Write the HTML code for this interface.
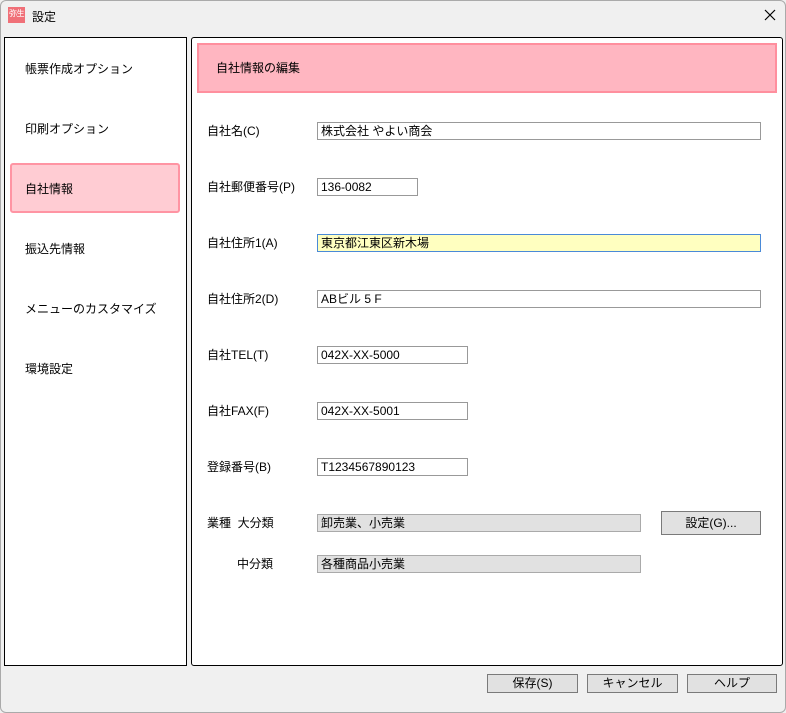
<!DOCTYPE html><html><head><meta charset="utf-8"><style>
*{box-sizing:border-box;margin:0;padding:0}
body{width:786px;height:713px;background:#f0f0f0;font-family:"Liberation Sans","Noto Sans CJK JP",sans-serif;font-size:12px;color:#000;position:relative;overflow:hidden}
.a{position:absolute}
.win{left:0;top:0;width:786px;height:713px;border:1px solid #aaa;border-radius:6px}
.in{position:absolute;height:18px;border:1px solid #999;background:#fff;padding:0 3px;line-height:16px}
.g{background:#e1e1e1;border-color:#aaa}
.btn{position:absolute;height:19px;border:1px solid #7a7a7a;background:#e1e1e1;text-align:center;line-height:17px}
.m{position:absolute;left:25px}
.l{position:absolute;left:207px}
</style></head><body>
<div class="a win"></div>
<div class="a" style="left:8px;top:7px;width:17px;height:16px;background:#f07078;color:#fff;font-size:8px;line-height:14px;text-align:center;white-space:nowrap;letter-spacing:-0.5px;overflow:hidden">弥生</div>
<div class="a" style="left:32px;top:8px;font-size:12px">設定</div>
<svg class="a" style="left:764px;top:9px" width="12" height="12"><path d="M1 1L11 11M11 1L1 11" stroke="#000" stroke-width="1.2"/></svg>
<div class="a" style="left:4px;top:37px;width:183px;height:629px;background:#fff;border:1px solid #000"></div>
<div class="a" style="left:191px;top:37px;width:592px;height:629px;background:#fff;border:1px solid #000;border-radius:3px"></div>
<div class="a" style="left:10px;top:163px;width:170px;height:50px;background:#ffccd3;border:2px solid #ff94a3;border-radius:3px"></div>
<div class="m" style="top:60px">帳票作成オプション</div>
<div class="m" style="top:120px">印刷オプション</div>
<div class="m" style="top:180px">自社情報</div>
<div class="m" style="top:240px">振込先情報</div>
<div class="m" style="top:300px">メニューのカスタマイズ</div>
<div class="m" style="top:360px">環境設定</div>
<div class="a" style="left:197px;top:43px;width:580px;height:50px;background:#ffb6c1;border:2px solid #ff8f9e;padding-left:17px;line-height:46px">自社情報の編集</div>
<div class="l" style="top:122px">自社名(C)</div><div class="in" style="left:317px;top:122px;width:444px">株式会社 やよい商会</div>
<div class="l" style="top:178px">自社郵便番号(P)</div><div class="in" style="left:317px;top:178px;width:101px">136-0082</div>
<div class="l" style="top:234px">自社住所1(A)</div><div class="in" style="left:317px;top:234px;width:444px;background:#ffffc0;border-color:#4a8ad8">東京都江東区新木場</div>
<div class="l" style="top:290px">自社住所2(D)</div><div class="in" style="left:317px;top:290px;width:444px">ABビル 5 F</div>
<div class="l" style="top:346px">自社TEL(T)</div><div class="in" style="left:317px;top:346px;width:151px">042X-XX-5000</div>
<div class="l" style="top:402px">自社FAX(F)</div><div class="in" style="left:317px;top:402px;width:151px">042X-XX-5001</div>
<div class="l" style="top:458px">登録番号(B)</div><div class="in" style="left:317px;top:458px;width:151px">T1234567890123</div>
<div class="l" style="top:514px">業種&nbsp; 大分類</div><div class="in g" style="left:317px;top:514px;width:324px">卸売業、小売業</div>
<div class="btn" style="left:661px;top:511px;width:100px;height:24px;line-height:22px">設定(G)...</div>
<div class="a" style="left:237px;top:555px">中分類</div><div class="in g" style="left:317px;top:555px;width:324px">各種商品小売業</div>
<div class="btn" style="left:487px;top:674px;width:91px">保存(S)</div>
<div class="btn" style="left:587px;top:674px;width:91px">キャンセル</div>
<div class="btn" style="left:687px;top:674px;width:90px">ヘルプ</div>
</body></html>
